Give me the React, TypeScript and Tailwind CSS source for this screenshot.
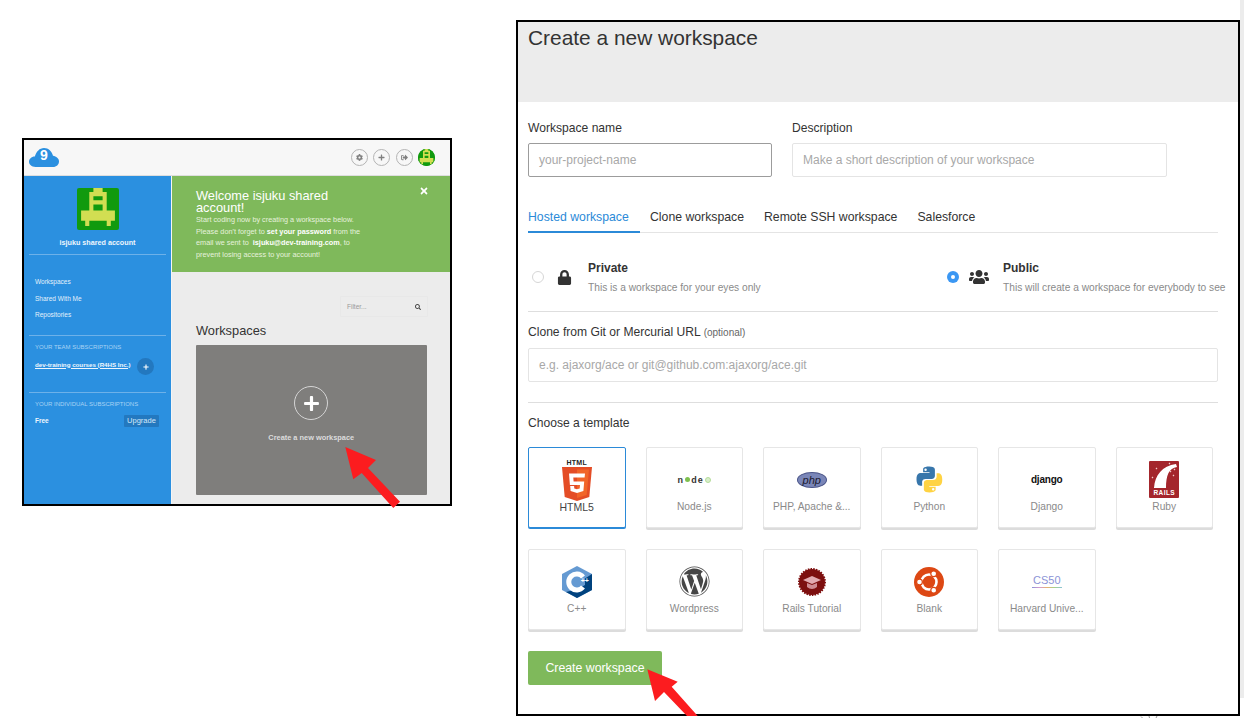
import { FaCog, FaLock, FaPlus, FaSearch, FaSignOutAlt, FaTimes, FaUsers, FaWordpress } from "react-icons/fa";

const font = { fontFamily: '"Liberation Sans", Arial, sans-serif' };

function Cloud() {
  return (
    <svg width="30" height="19" viewBox="0 0 30 19">
      <path d="M6.500 19C2.500 19 0 16.500 0 13.800s2.300-5.300 5.800-5.300C7.500 3.500 10.500 0 15 0s8 3.500 9 7.800c3.200.4 6 2.700 6 5.700S27.500 19 24 19z" fill="#2b90e0" />
      <text x="15" y="12" textAnchor="middle" fontSize="14" fontWeight="700" fill="#fff" fontFamily="Liberation Sans, Arial, sans-serif">9</text>
    </svg>
  );
}

function PixelAvatar({ size }: { size: number }) {
  return (
    <svg width={size} height={size} viewBox="0 0 41 41" className="block">
      <rect width="41" height="41" rx="2" fill="#119a0e" />
      <path d="M16 0h9v4h4v18h8v10h-4v5h-4v-5H12v5H8v-5H4V22h8V4h4z" fill="#d2de52" />
      <path d="M16 8h9v4h-9zM16 16h9v6h-9z" fill="#119a0e" />
    </svg>
  );
}

function RoundBtn({ children }: { children: React.ReactNode }) {
  return (
    <div className="flex h-[17px] w-[17px] items-center justify-center rounded-full border border-[#b4b4b4] text-[#808080] text-[7px]">
      {children}
    </div>
  );
}

function Dashboard() {
  return (
    <div className="flex h-[368px] w-[430px] shrink-0 flex-col border-2 border-black bg-white">
      <div className="flex h-[36px] shrink-0 items-center justify-between border-b border-[#dedede] bg-[#f7f7f7] pl-[5px] pr-[15px]">
        <Cloud />
        <div className="flex items-center gap-[5.500px]">
          <RoundBtn><FaCog /></RoundBtn>
          <RoundBtn><FaPlus /></RoundBtn>
          <RoundBtn><FaSignOutAlt /></RoundBtn>
          <div className="flex h-[17px] w-[17px] items-center justify-center overflow-hidden rounded-full bg-[#119a0e]">
            <PixelAvatar size={17} />
          </div>
        </div>
      </div>
      <div className="flex min-h-0 flex-1">
        <aside className="flex w-[147px] shrink-0 flex-col bg-[#2b90e0] px-[5px] text-white">
          <div className="mt-[12px] flex justify-center"><PixelAvatar size={42} /></div>
          <div className="mt-[8px] text-center text-[7.200px] font-bold leading-[9px] text-[#eef6fd]">isjuku shared account</div>
          <div className="mt-[7px] border-t border-[#6db1e9]" />
          <nav className="mt-[23px] flex flex-col gap-[8.500px] pl-[6px] text-[6.500px] leading-[8px] text-[#e4f1fb]">
            <span>Workspaces</span>
            <span>Shared With Me</span>
            <span>Repositories</span>
          </nav>
          <div className="mt-[16px] border-t border-[#6db1e9]" />
          <div className="mt-[7px] pl-[6px] text-[6px] leading-[8px] text-[#a9d3f4]">YOUR TEAM SUBSCRIPTIONS</div>
          <div className="mt-[7px] flex items-start pl-[6px]">
            <span className="mt-[2.500px] w-[95px] whitespace-nowrap text-[6.200px] font-bold leading-[8px] text-[#eef6fd] underline">dev-training courses (R4HS Inc.)</span>
            <span className="ml-[7px] flex h-[17px] w-[17px] items-center justify-center rounded-full bg-[#2378bf] text-[6px]"><FaPlus /></span>
          </div>
          <div className="mt-[17px] border-t border-[#6db1e9]" />
          <div className="mt-[7px] pl-[6px] text-[6px] leading-[8px] text-[#a9d3f4]">YOUR INDIVIDUAL SUBSCRIPTIONS</div>
          <div className="mt-[7px] flex items-center justify-between pl-[6px] pr-[7px]">
            <span className="text-[6.500px] font-bold text-[#eef6fd]">Free</span>
            <span className="flex h-[12px] w-[35px] items-center justify-center rounded-[1px] bg-[#2378bf] text-[7.500px] text-[#d5e8f8]">Upgrade</span>
          </div>
        </aside>
        <main className="flex min-w-0 flex-1 flex-col border-l border-[#f5f5f5] bg-[#ececec]">
          <div className="relative flex h-[96px] shrink-0 flex-col bg-[#7fb95b] pl-[24px] pt-[14px] text-white">
            <div className="w-[152px] text-[12.800px] leading-[12px]">Welcome isjuku shared account!</div>
            <div className="mt-0 whitespace-nowrap text-[7.300px] leading-[11.500px] text-[#e6f2dd]">
              <div>Start coding now by creating a workspace below.</div>
              <div>Please don't forget to <b className="text-white">set your password</b> from the</div>
              <div>email we sent to &nbsp;<b className="text-white">isjuku@dev-training.com</b>, to</div>
              <div>prevent losing access to your account!</div>
            </div>
            <FaTimes className="absolute right-[21px] top-[10px] text-[10px] text-white" />
          </div>
          <div className="flex flex-1 flex-col pl-[24px] pr-[24px]">
            <div className="mt-[24px] ml-[144px] flex h-[21px] w-[88px] shrink-0 items-center justify-between self-start rounded-[1px] border border-[#e8e8e8] px-[6px] text-[6.500px] text-[#999]">
              <span>Filter...</span>
              <FaSearch className="text-[6px] text-[#444]" />
            </div>
            <div className="mt-[6px] text-[12.800px] leading-[15px] text-[#333]">Workspaces</div>
            <div className="mt-[7px] flex h-[150px] w-[230.500px] shrink-0 flex-col items-center rounded-[1px] bg-[#7f7e7c]">
              <div className="mt-[41px] flex h-[34px] w-[34px] items-center justify-center rounded-full border border-[#d5d5d5] text-[17px] text-white"><FaPlus /></div>
              <div className="mt-[12.500px] whitespace-nowrap text-[7.400px] font-bold leading-[9px] text-[#dcdcdc]">Create a new workspace</div>
            </div>
          </div>
        </main>
      </div>
    </div>
  );
}

function Html5() {
  return (
    <div className="flex flex-col items-center">
      <span className="text-[7px] font-bold leading-[7px] tracking-[0.3px] text-[#222]">HTML</span>
      <svg width="30" height="34" viewBox="0 0 30 34" className="mt-[1px]">
        <path d="M0 0h30l-2.700 30L15 34 2.700 30z" fill="#e44d26" />
        <path d="M15 2.500h12l-2.300 25.500L15 31z" fill="#f16529" />
        <path d="M7 6.500h16l-.4 4H11.300l.3 4h10.600l-.8 9.500-6.400 2-6.400-2-.4-5h3.900l.2 2.500 2.700.8 2.700-.8.3-3.500H7.900z" fill="#fff" />
      </svg>
    </div>
  );
}

function Node() {
  return (
    <div className="flex h-[10px] items-center text-[9px] font-bold tracking-[1.100px] text-[#333]" style={{ lineHeight: "10px" }}>
      <span>n</span>
      <span className="mx-[1px] h-[5px] w-[5px] rounded-full bg-[#7fc04f]" />
      <span>de</span>
      <span className="ml-[1px] h-[6px] w-[6px] rounded-full border border-[#b5dc9a] bg-[#d8eecb]" />
    </div>
  );
}

function Php() {
  return (
    <div className="flex h-[16px] w-[30px] items-center justify-center rounded-[50%] border border-[#4a5488] bg-[#7a86b8] text-[11px] italic leading-[14px] text-[#1a1a2e]">php</div>
  );
}

function Python() {
  return (
    <svg width="27" height="27" viewBox="0 0 110 110">
      <path d="M54 2C28 2 29 13 29 13v12h26v4H18S2 27 2 54s14 26 14 26h9V67s-1-14 14-14h25s13 0 13-13V15S79 2 54 2zM39 10a5 5 0 1 1 0 10 5 5 0 0 1 0-10z" fill="#3776ab" />
      <path d="M55 108c26 0 25-11 25-11V85H54v-4h37s16 2 16-25-14-26-14-26h-9v13s1 14-14 14H45s-13 0-13 13v25s-2 13 23 13zm15-8a5 5 0 1 1 0-10 5 5 0 0 1 0 10z" fill="#ffd343" />
    </svg>
  );
}

function Django() {
  return <span className="text-[10px] font-bold leading-[12px] text-[#111]" style={{ letterSpacing: "-0.2px" }}>django</span>;
}

function Rails() {
  return (
    <div className="relative h-[37px] w-[30px] overflow-hidden rounded-[1px] bg-[#a4262c]">
      <svg width="30" height="37" viewBox="0 0 30 37" className="absolute left-0 top-0">
        <path d="M5 27C6 14 13 5 27 3l1 3C20 7 17 14 17 27z" fill="#fff" />
        <path d="M20 2l1 1M25 8l1 1M21 10l1 1M24 14l1 1M3 16l1 1M7 7l1 1" stroke="#f1c9c9" strokeWidth="1.200" />
      </svg>
      <span className="absolute bottom-[2px] left-0 w-full text-center text-[6.500px] font-bold leading-[7px] tracking-[0.4px] text-white">RAILS</span>
    </div>
  );
}

function Cpp() {
  return (
    <div className="relative h-[32px] w-[30px]">
      <svg width="30" height="32" viewBox="0 0 30 32" className="absolute left-0 top-0">
        <path d="M15 0l15 8v16l-15 8-15-8V8z" fill="#659ad2" />
        <path d="M4 26l11 6 15-8V8l-7 4.500v6.500l-7 4z" fill="#00427e" />
        <path d="M21 11a8 8 0 1 0 0 10" fill="none" stroke="#fff" strokeWidth="5" />
      </svg>
      <span className="absolute left-[19px] top-[11px] text-[7px] font-bold leading-[8px] text-white">++</span>
    </div>
  );
}

function RailsTutorial() {
  return (
    <svg width="28" height="28" viewBox="0 0 28 28">
      <circle cx="14" cy="14" r="13" fill="#7d0f0f" stroke="#7d0f0f" strokeWidth="2" strokeDasharray="1.500 1.200" />
      <path d="M14 8l9 4-9 4-9-4z" fill="#e2aab0" />
      <path d="M9 15v4c3 2.500 7 2.500 10 0v-4l-5 2z" fill="#cf8b92" />
    </svg>
  );
}

function Ubuntu() {
  return (
    <svg width="30" height="30" viewBox="0 0 30 30">
      <circle cx="15" cy="15" r="15" fill="#dd4814" />
      <circle cx="15" cy="15" r="7.500" fill="none" stroke="#fff" strokeWidth="2.600" />
      <circle cx="5.500" cy="15" r="2.900" fill="#fff" stroke="#dd4814" strokeWidth="1.200" />
      <circle cx="19.700" cy="6.800" r="2.900" fill="#fff" stroke="#dd4814" strokeWidth="1.200" />
      <circle cx="19.700" cy="23.200" r="2.900" fill="#fff" stroke="#dd4814" strokeWidth="1.200" />
    </svg>
  );
}

function Cs50() {
  return (
    <div className="flex flex-col items-center">
      <span className="text-[11px] leading-[11px] text-[#8b93d6]">CS50</span>
      <div className="mt-[1px] h-[1px] w-[30px]" style={{ background: "linear-gradient(90deg,#8b93d6,#d69bd0,#e8b06f,#a5d08a,#8bc3d6)" }} />
    </div>
  );
}

const templates: { name: string; icon: React.ReactNode }[] = [
  { name: "HTML5", icon: <Html5 /> },
  { name: "Node.js", icon: <Node /> },
  { name: "PHP, Apache &...", icon: <Php /> },
  { name: "Python", icon: <Python /> },
  { name: "Django", icon: <Django /> },
  { name: "Ruby", icon: <Rails /> },
  { name: "C++", icon: <Cpp /> },
  { name: "Wordpress", icon: <FaWordpress className="text-[31px] text-[#464646]" /> },
  { name: "Rails Tutorial", icon: <RailsTutorial /> },
  { name: "Blank", icon: <Ubuntu /> },
  { name: "Harvard Unive...", icon: <Cs50 /> },
];

function Template({ name, icon, active }: { name: string; icon: React.ReactNode; active: boolean }) {
  return (
    <div
      className={
        active
          ? "flex h-[81px] flex-col items-center rounded-[2px] border border-[#2b8ad8] bg-white shadow-[0_1px_0_#2b8ad8]"
          : "flex h-[81px] flex-col items-center rounded-[2px] border border-[#e6e6e6] bg-white shadow-[0_2px_0_#dcdcdc]"
      }
    >
      <div className="flex h-[52px] w-full shrink-0 items-center justify-center pt-[11px]">{icon}</div>
      <div className={active ? "mt-[1px] text-[10.500px] leading-[12px] text-[#444]" : "mt-[1px] text-[10.200px] leading-[12px] text-[#8a8a8a]"}>{name}</div>
    </div>
  );
}

function Radio({ checked }: { checked: boolean }) {
  return checked ? (
    <span className="flex h-[12px] w-[12px] shrink-0 items-center justify-center rounded-full bg-[#3b97f3]">
      <span className="h-[4px] w-[4px] rounded-full bg-white" />
    </span>
  ) : (
    <span className="h-[12px] w-[12px] shrink-0 rounded-full border border-[#d6d6d6] bg-white" />
  );
}

function Access({ title, desc, checked, icon, className }: { title: string; desc: string; checked: boolean; icon: React.ReactNode; className: string }) {
  return (
    <div className={className}>
      <div className="flex w-[50px] shrink-0 items-center pl-[4px]">
        <Radio checked={checked} />
        <span className="ml-[10px] flex w-[20px] justify-center text-[#333]">{icon}</span>
      </div>
      <div className="ml-[10px]">
        <div className="text-[12px] font-bold leading-[14px] text-[#333]">{title}</div>
        <div className="mt-[6px] whitespace-nowrap text-[10.200px] leading-[13px] text-[#8a8a8a]">{desc}</div>
      </div>
    </div>
  );
}

function CreateForm() {
  return (
    <div className="flex h-[696px] w-[724px] shrink-0 flex-col overflow-hidden border-2 border-black bg-white">
      <div className="h-[80px] shrink-0 bg-[#ececec] pl-[10px] pt-[3px] text-[20.900px] leading-[26px] text-[#333]">Create a new workspace</div>
      <div className="flex flex-col pl-[10px] pr-[20px]">
        <div className="mt-[19px] flex gap-[20px]">
          <div className="w-[244px]">
            <div className="text-[12.100px] leading-[14px] text-[#333]">Workspace name</div>
            <div className="mt-[8px] flex h-[34px] items-center rounded-[2px] border border-[#9c9c9c] pl-[10px] text-[12px] text-[#a8a8a8]">your-project-name</div>
          </div>
          <div className="w-[375px]">
            <div className="text-[12.100px] leading-[14px] text-[#333]">Description</div>
            <div className="mt-[8px] flex h-[34px] items-center rounded-[2px] border border-[#e4e4e4] pl-[10px] text-[12px] text-[#a8a8a8]">Make a short description of your workspace</div>
          </div>
        </div>
        <div className="mt-[25px] flex h-[31px] items-end gap-[20px] border-b border-[#e4e4e4] text-[12.250px] leading-[15px] text-[#333]">
          <div className="-mb-px w-[112px] whitespace-nowrap border-b-2 border-[#2b8ad8] pb-[6px] text-[#2b8ad8]">Hosted workspace</div>
          <span className="-ml-[10px] pb-[7px]">Clone workspace</span>
          <span className="pb-[7px]">Remote SSH workspace</span>
          <span className="pb-[7px]">Salesforce</span>
        </div>
        <div className="mt-[27px] flex h-[34px] items-center">
          <Access title="Private" desc="This is a workspace for your eyes only" checked={false} icon={<FaLock className="text-[15px]" />} className="flex w-[415px] shrink-0 items-center" />
          <Access title="Public" desc="This will create a workspace for everybody to see" checked={true} icon={<FaUsers className="text-[20px]" />} className="flex shrink-0 items-center" />
        </div>
        <div className="mt-[17px] border-t border-[#dedede]" />
        <div className="mt-[13px] text-[12.100px] leading-[14px] text-[#333]">Clone from Git or Mercurial URL <span className="text-[10px] text-[#666]">(optional)</span></div>
        <div className="mt-[8px] flex h-[34px] items-center rounded-[2px] border border-[#e4e4e4] pl-[10px] text-[12px] text-[#a8a8a8]">e.g. ajaxorg/ace or git@github.com:ajaxorg/ace.git</div>
        <div className="mt-[20px] border-t border-[#dedede]" />
        <div className="mt-[13px] text-[12.100px] leading-[14px] text-[#333]">Choose a template</div>
        <div className="mt-[17px] grid w-[685px] grid-cols-6 gap-x-[20px] gap-y-[21px]">
          {templates.map((t, i) => (
            <Template key={t.name} name={t.name} icon={t.icon} active={i === 0} />
          ))}
        </div>
        <div className="mt-[21px] flex h-[34px] w-[134px] items-center justify-center rounded-[2px] bg-[#7fb95b] text-[12.300px] text-white">Create workspace</div>
      </div>
    </div>
  );
}

export default function App() {
  return (
    <div className="relative h-[718px] w-[1244px] overflow-hidden bg-white" style={font}>
      <div className="flex h-full items-start pl-[22px] pt-[20px]">
        <div className="mt-[118px]"><Dashboard /></div>
        <div className="ml-[64px]"><CreateForm /></div>
        <div className="ml-[0px] h-full w-[4px] -mt-[20px] bg-[#ececec]" />
      </div>
      <svg width="1244" height="718" viewBox="0 0 1244 718" className="pointer-events-none absolute left-0 top-0">
        <path d="M345.300 447L376 460l-8 8 32 33.700-6.700 6.300-31.600-35-8.400 6.300z" fill="#fc1c1f" />
        <path d="M647.300 669.300l30.400 12.400-6 5 26 29.300H687l-23-24-9 9z" fill="#fc1c1f" />
        <path d="M1141 716.500l1.500 1.500M1149 716l.5 2M1157 716l-1 2" stroke="#999" strokeWidth="1" />
      </svg>
    </div>
  );
}
